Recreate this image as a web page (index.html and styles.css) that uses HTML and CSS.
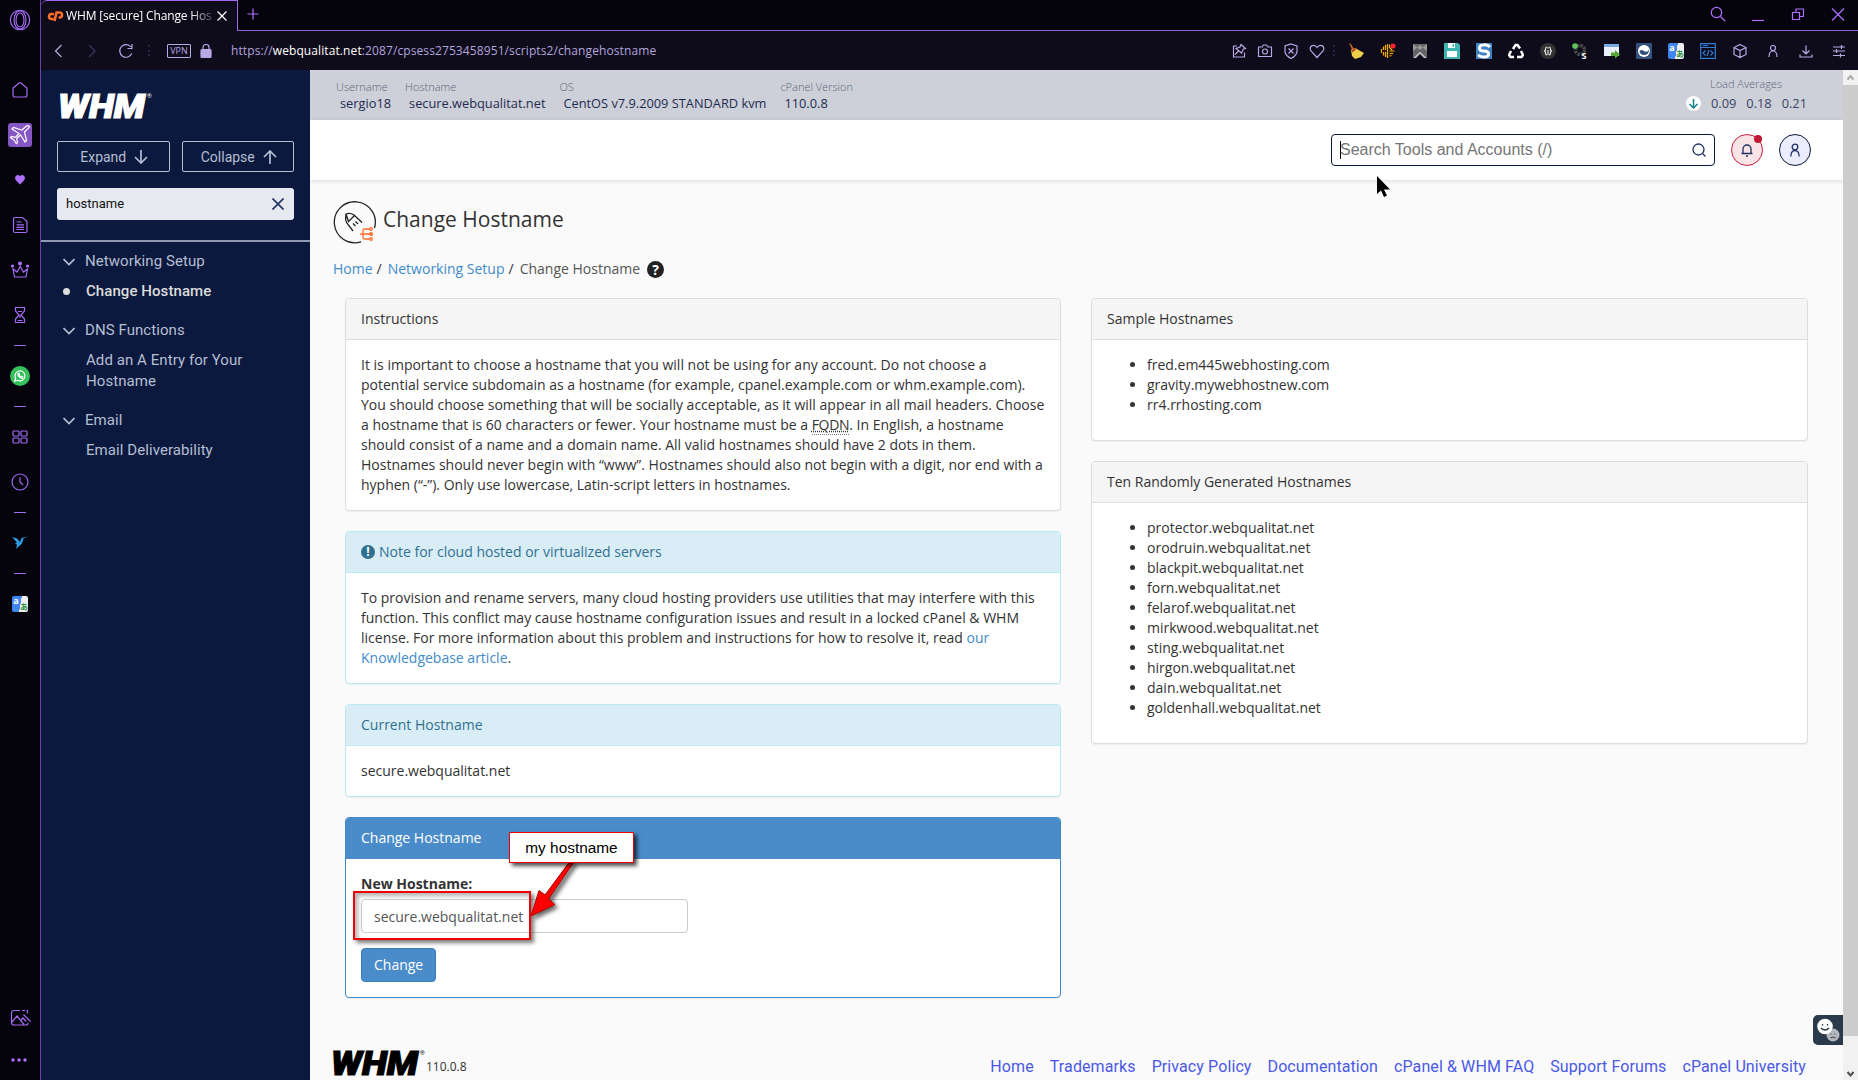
FILE: index.html
```html
<!DOCTYPE html>
<html lang="en">
<head>
    <meta charset="UTF-8">
    <meta name="viewport" content="width=device-width, initial-scale=1.0">
    <title>WHM [secure] Change Hostname</title>
    <link rel="stylesheet" href="styles.css">
</head>
<body>
    <nav class="rail">
        <div class="rail-logo"><svg width="22" height="22" viewBox="0 0 22 22"><circle cx="11" cy="11" r="9.7"/><ellipse cx="11" cy="11" rx="6" ry="9"/><ellipse cx="11" cy="11" rx="4" ry="7"/></svg></div>
        <div class="rail-item"><svg width="18" height="18" viewBox="0 0 18 18"><path d="M2 7.2 8 2q1-.8 2 0l6 5.2V14q0 2-2 2H4q-2 0-2-2z"/></svg></div>
        <div class="rail-item"><div class="rail-active"><svg width="22" height="22" viewBox="0 0 22 22"><path d="M20 2c-1.3-1-3 .2-4.300 1.500L13 6 4.500 3.500 3 5l7 4.500-3.500 3.800-4-.8-1 1.200 3.500 2.300 2.300 3.500 1.200-1-.8-4L11.500 11l4.500 7 1.500-1.500L15.500 8l2.700-2.700C19.500 4 21 3 20 2z"/></svg></div></div>
        <div class="rail-item"><svg class="solid" width="12" height="11" viewBox="0 0 12 11"><path d="M6 10.500 1.700 6C-.5 3 3.500-1 6 2.200 8.500-1 12.500 3 10.300 6z"/></svg></div>
        <div class="rail-item"><svg width="18" height="18" viewBox="0 0 18 18"><path d="M4 1.500h7.500L16 5.500V15q0 1.500-1.500 1.500H4Q2.500 16.500 2.500 15V3Q2.500 1.500 4 1.500zM5.500 6h5M5.500 8.800h7.500M5.500 11.300h7.500M5.500 13.500h7.500"/></svg></div>
        <div class="rail-item"><svg width="20" height="20" viewBox="0 0 20 20"><path d="M3 9l1.500 8h11.500L17.500 9l-4 3-3.300-5.500L7 12z"/><g class="solid"><circle cx="10" cy="3.500" r="2"/><circle cx="2.500" cy="6" r="1.600"/><circle cx="17.500" cy="6" r="1.600"/></g></svg></div>
        <div class="rail-item"><svg width="18" height="18" viewBox="0 0 18 18"><path d="M4.500 1.500h9v3.500L10 9l3.500 4v3.500h-9V13L8 9 4.500 5zM7 5.500h4M6.500 14.500h5M9 9v3"/></svg></div>
        <hr>
        <div class="rail-item"><svg class="wa" width="20" height="20" viewBox="0 0 20 20"><circle cx="10" cy="10" r="10"/><path d="M4.800 15.200l.8-2.900a5 5 0 1 1 2 2z"/><path d="M8 7.500c-.3 2.500 2 5 4.500 4.800l.3-1.200-1.400-.8-.8.6-1.500-1.500.5-.8L9 7.200z"/></svg></div>
        <hr>
        <div class="rail-item"><svg width="16" height="16" viewBox="0 0 16 16"><rect x="1" y="2" width="6" height="5" rx="1"/><rect x="9" y="2" width="6" height="5" rx="1"/><rect x="1" y="9" width="6" height="5" rx="1"/><rect x="9" y="9" width="6" height="5" rx="1"/></svg></div>
        <div class="rail-item"><svg width="18" height="18" viewBox="0 0 18 18"><circle cx="9" cy="9" r="8"/><path d="M9 4.500V9l3 3"/></svg></div>
        <hr>
        <div class="rail-item"><svg class="bird" width="16" height="14" viewBox="0 0 16 14"><path d="M0 1 5 2.500 8 6l1.500-4L16 .5 11.500 2.500 10 7.500 4 13l1-4L3 7l2-.5z"/></svg></div>
        <hr>
        <div class="rail-item"><div class="translate"><span>a</span><span>あ</span></div></div>
        <div class="rail-bottom">
            <svg width="22" height="18" viewBox="0 0 22 18"><path d="M10 1.500H4q-2.500 0-2.500 2.500v9.500Q1.500 16 4 16h12q2 0 2-2M2 13l5-6 7 8.500M11 11l2-2 3 3.500M12 1.500h3M16.500 1.500h1v3M13.500 5.500l7 7"/></svg>
            <svg class="solid" width="18" height="6" viewBox="0 0 18 6"><circle cx="3" cy="3" r="1.700"/><circle cx="9" cy="3" r="1.700"/><circle cx="15" cy="3" r="1.700"/></svg>
        </div>
    </nav>

    <div class="window">
        <div class="tabs">
            <div class="tab">
                <svg width="17" height="12" viewBox="0 0 17 12"><path d="M7 4H4.500a2.500 2.500 0 0 0 0 5H6.500M7.500 11 9.500 2.500H12.500a2.500 2.500 0 0 1 0 5H11.500"/></svg>
                <span class="tab-title">WHM [secure] Change Hos</span>
                <svg class="tab-close" width="12" height="12" viewBox="0 0 12 12"><path d="M1.500 1.500l9 9M10.500 1.500l-9 9"/></svg>
            </div>
            <div class="tab-rest">
                <svg width="12" height="12" viewBox="0 0 12 12"><path d="M6 .5v11M.5 6h11"/></svg>
                <div class="win-buttons">
                    <svg width="16" height="16" viewBox="0 0 16 16"><circle cx="6.500" cy="6.500" r="5.200"/><path d="M10.500 10.500 15 15"/></svg>
                    <svg width="16" height="16" viewBox="0 0 16 16"><path d="M2 14.500h12"/></svg>
                    <svg width="16" height="16" viewBox="0 0 16 16"><path d="M2.500 6.500h7v7h-7zM6 6V3h7.500v7.500H10"/></svg>
                    <svg width="16" height="16" viewBox="0 0 16 16"><path d="M2 2.500l12 12M14 2.500l-12 12"/></svg>
                </div>
            </div>
        </div>

        <div class="toolbar">
            <div class="nav-buttons">
                <svg width="14" height="14" viewBox="0 0 14 14"><path d="M9.500 1 3.500 7l6 6"/></svg>
                <svg class="dim" width="14" height="14" viewBox="0 0 14 14"><path d="M4 1l6 6-6 6"/></svg>
                <svg width="16" height="16" viewBox="0 0 16 16"><path d="M13.800 10.500A6.300 6.300 0 1 1 13 4M14 1v4.500H9.500"/></svg>
            </div>
            <span class="dots"></span>
            <span class="vpn">VPN</span>
            <svg class="lock" width="12" height="14" viewBox="0 0 12 14"><rect x="1" y="5.500" width="10" height="8" rx="1"/><path d="M3 6V3.500a3 3 0 0 1 6 0V6"/></svg>
            <div class="url">https://<b>webqualitat.net</b>:2087/cpsess2753458951/scripts2/changehostname</div>
            <div class="page-actions">
                <svg width="16" height="16" viewBox="0 0 16 16"><path d="M6 3H2.500v11h11V9.500M10 1.500l4.500 4-2 .5-2 4-5.500-4.500 4-1.500zM7.500 8 4 11.500"/></svg>
                <svg width="16" height="16" viewBox="0 0 16 16"><path d="M1.500 4h3.500l1.500-2h3L11 4h3.500v9.500h-13z"/><circle cx="8" cy="8.500" r="2.500"/></svg>
                <svg width="16" height="16" viewBox="0 0 16 16"><path d="M8 1 14 3v6q-1 4-6 6.500Q3 13 2 9V3zM5.500 5.500l5 5M10.500 5.500l-5 5"/></svg>
                <svg width="16" height="16" viewBox="0 0 16 16"><path d="M8 14.500 2 8C-1 3.500 5 0 8 4.500 11 0 17 3.500 14 8z"/></svg>
            </div>
            <span class="dots"></span>
            <div class="extensions">
                <svg width="16" height="16" viewBox="0 0 16 16"><path d="M1 0l2 1 3 5-2 1z" fill="#b5651d"/><path d="M3 7l4-2 9 5-3 4-6 2-3-3z" fill="#f0d048"/><path d="M3.500 7.500 7 5l1 1.500-3.500 3z" fill="#b33a22"/></svg>
                <svg width="16" height="16" viewBox="0 0 16 16"><circle cx="7.500" cy="8" r="7" fill="#1c1300"/><path d="M1.500 6v4M3.500 3.500v3.500M3.500 9v3.500M5.500 2v5M5.500 9v5M7.500 1v14M9.500 1.500v3L12 7M9.500 8h5M9.500 10.500H13M9.500 13l2-.5" stroke="#efae16" stroke-width="1.200"/><circle cx="13" cy="3" r="2.500" fill="#f23"/></svg>
                <svg width="16" height="16" viewBox="0 0 16 16"><path d="M1 1h14v14L8 7.500 1 15z" fill="#666"/><path d="M1 1l7 6 7-6v7L8 2 1 8z" fill="#999"/><path d="M1 15l7-7 7 7h-3l-4-4-4 4z" fill="#bbb"/></svg>
                <svg width="16" height="16" viewBox="0 0 16 16"><path d="M0 0h14l2 2v14H0z" fill="#3fb5b0"/><path d="M4 0h7v5H4zM3 8h10v6H3z" fill="#fff"/><path d="M8.500 1h1.500v3H8.500z" fill="#3fb5b0"/></svg>
                <svg width="16" height="16" viewBox="0 0 16 16"><path d="M0 0h16v16H0z" fill="#3e83c4"/><path d="M14 4Q12 1.500 8 1.800 3.500 2 3.500 5t4.500 3 4.500 3-4.500 3q-4 0-6-2" stroke="#fff" stroke-width="3"/></svg>
                <svg width="16" height="16" viewBox="0 0 16 16"><path d="M5 6 7.500 2h2L12 5.500M13 8l2 4-1.500 2H9M6 14H2.500L1 12l2-4" stroke="#fff" stroke-width="2.500"/></svg>
                <svg width="16" height="16" viewBox="0 0 16 16"><circle cx="8" cy="8" r="8" fill="#333"/><path d="M7 4Q5.500 4 5.500 6v1L4.500 8l1 1v1q0 2 1.500 2M9 4q1.500 0 1.500 2v1l1 1-1 1v1q0 2-1.500 2M8 4v1.500M8 7v5" stroke="#eee" stroke-width="1.100"/></svg>
                <svg width="16" height="16" viewBox="0 0 16 16"><circle cx="8" cy="7" r="4.500" stroke="#484848" stroke-width="3.500" stroke-dasharray="2.500 1"/><circle cx="3" cy="3" r="2.800" fill="#5fc45a"/><text x="9.500" y="15.500" class="badge-s">S</text></svg>
                <svg width="16" height="16" viewBox="0 0 16 16"><path d="M0 1h15v12H0z" fill="#e9f2fb"/><path d="M0 1h15v3H0z" fill="#7aa9de"/><path d="M7 9.500h4V7l5 4.500-5 4V13H7z" fill="#57a639"/></svg>
                <svg width="16" height="16" viewBox="0 0 16 16"><path d="M0 0h16v16H0z" fill="#34507c"/><circle cx="8" cy="8" r="6" fill="#fff"/><path d="M3.500 8.500Q5 6 8 8t5-1.500Q13 12 8 12 4.500 12 3.500 8.500z" fill="#34507c"/></svg>
                <div class="translate"><span>a</span><span>あ</span></div>
                <svg width="16" height="16" viewBox="0 0 16 16"><path d="M.7.700h14.600v14.600H.7zM1 4.500h14M3 2.500h5M5.500 7.500l-2.500 2.500 2.500 2.500M10.500 7.500l2.500 2.500-2.500 2.500M9 7l-2 6" stroke="#2f7fd6" stroke-width="1.200"/></svg>
            </div>
            <div class="browser-actions">
                <svg width="16" height="16" viewBox="0 0 16 16"><path d="M8 1.500 14 4.500v7L8 14.500 2 11.500v-7zM2 4.500l6 3 6-3M8 7.500v7"/></svg>
                <svg width="16" height="16" viewBox="0 0 16 16"><circle cx="8" cy="5" r="2.500"/><path d="M4 14Q4 8 8 8t4 6"/></svg>
                <svg width="16" height="16" viewBox="0 0 16 16"><path d="M8 2.500v8M4.500 7.500 8 11l3.500-3.500M2 11.500V14h12v-2.500"/></svg>
                <svg width="16" height="16" viewBox="0 0 16 16"><path d="M2 4h12M2 8h12M2 12.500h12M10.500 2v4M5.500 6v4M9.500 10.500v4"/></svg>
            </div>
        </div>

        <div class="page">
            <aside class="sidebar">
                <svg class="whm-logo" width="96" height="28" viewBox="0 0 96 28"><text x="1" y="26" textLength="87" lengthAdjust="spacingAndGlyphs">WHM</text><text class="reg" x="90" y="6">®</text></svg>
                <div class="side-buttons">
                    <button>Expand <svg width="14" height="14" viewBox="0 0 14 14"><path d="M7 0v13M1 7l6 6 6-6"/></svg></button>
                    <button>Collapse <svg width="14" height="14" viewBox="0 0 14 14"><path d="M7 14V1M1 7l6-6 6 6"/></svg></button>
                </div>
                <div class="side-search"><span>hostname</span><svg width="12" height="12" viewBox="0 0 12 12"><path d="M.5.500l11 11M11.500.500l-11 11"/></svg></div>
                <div class="menu">
                    <h4><svg width="12" height="8" viewBox="0 0 12 8"><path d="M.5 1 6 6.500 11.500 1"/></svg>Networking Setup</h4>
                    <a class="current" href="#">Change Hostname</a>
                    <h4><svg width="12" height="8" viewBox="0 0 12 8"><path d="M.5 1 6 6.500 11.500 1"/></svg>DNS Functions</h4>
                    <a href="#">Add an A Entry for Your Hostname</a>
                    <h4><svg width="12" height="8" viewBox="0 0 12 8"><path d="M.5 1 6 6.500 11.500 1"/></svg>Email</h4>
                    <a href="#">Email Deliverability</a>
                </div>
            </aside>

            <main class="main">
                <header class="server-info">
                    <dl><dt>Username</dt><dd>sergio18</dd></dl>
                    <dl><dt>Hostname</dt><dd>secure.webqualitat.net</dd></dl>
                    <dl><dt>OS</dt><dd>CentOS v7.9.2009 STANDARD kvm</dd></dl>
                    <dl><dt>cPanel Version</dt><dd>110.0.8</dd></dl>
                    <div class="load">
                        <div class="load-label">Load Averages</div>
                        <div class="load-values"><svg width="15" height="15" viewBox="0 0 15 15"><circle cx="7.500" cy="7.500" r="7.500"/><path d="M7.500 3v9M3.500 8l4 4 4-4"/></svg><span>0.09</span><span>0.18</span><span>0.21</span></div>
                    </div>
                </header>
                <div class="topbar">
                    <div class="search"><span>Search Tools and Accounts (/)</span><svg width="14" height="14" viewBox="0 0 14 14"><circle cx="6.500" cy="6.500" r="5.500"/><path d="M10.500 10.500 13.500 13.500"/></svg></div>
                    <div class="round bell"><svg width="14" height="14" viewBox="0 0 14 14"><path d="M1.500 10.500h11M3 10.500V6a4 4 0 0 1 8 0v4.500M6 13h2"/></svg></div>
                    <div class="round user"><svg width="14" height="14" viewBox="0 0 14 14"><circle cx="7" cy="4" r="2.800"/><path d="M2.800 13.500Q3 7.500 7 7.500t4.200 6"/></svg></div>
                </div>

                <div class="content">
                    <div class="title">
                        <svg width="46" height="44" viewBox="0 0 46 44"><path d="M41.500 28A20.500 20.500 0 1 0 28 41.800"/><path d="M13 14q4-1.500 8 1l8 7.500M13 14q-1 5 .5 8.500L20 31M13 14l2.500 7.500 6-6M20 23.500l2.500 2.500M22.500 21.500l2.500 2.500"/><path class="orange" d="M27 34h13M37 29h-5.500q-1.500 0-1.500 1.500v7q0 1.500 1.500 1.500H37"/><g class="orange"><circle cx="38" cy="29" r="1.300"/><circle cx="38" cy="34" r="1.300"/><circle cx="38" cy="39" r="1.300"/></g></svg>
                        <h1>Change Hostname</h1>
                    </div>
                    <div class="breadcrumb">
                        <a href="#">Home</a><i>/</i><a href="#">Networking Setup</a><i>/</i><span class="here">Change Hostname</span>
                        <span class="help">?</span>
                    </div>

                    <div class="columns">
                        <div class="column">
                            <section class="panel">
                                <h3>Instructions</h3>
                                <div class="panel-body">It is important to choose a hostname that you will not be using for any account. Do not choose a<br>potential service subdomain as a hostname (for example, cpanel.example.com or whm.example.com).<br>You should choose something that will be socially acceptable, as it will appear in all mail headers. Choose<br>a hostname that is 60 characters or fewer. Your hostname must be a <abbr>FQDN</abbr>. In English, a hostname<br>should consist of a name and a domain name. All valid hostnames should have 2 dots in them.<br>Hostnames should never begin with “www”. Hostnames should also not begin with a digit, nor end with a<br>hyphen (“-”). Only use lowercase, Latin-script letters in hostnames.</div>
                            </section>
                            <section class="panel info">
                                <h3><span class="alert">!</span>Note for cloud hosted or virtualized servers</h3>
                                <div class="panel-body">To provision and rename servers, many cloud hosting providers use utilities that may interfere with this<br>function. This conflict may cause hostname configuration issues and result in a locked cPanel &amp; WHM<br>license. For more information about this problem and instructions for how to resolve it, read <a href="#">our<br>Knowledgebase article</a>.</div>
                            </section>
                            <section class="panel info">
                                <h3>Current Hostname</h3>
                                <div class="panel-body">secure.webqualitat.net</div>
                            </section>
                            <section class="panel primary">
                                <h3>Change Hostname</h3>
                                <div class="panel-body">
                                    <label for="hostname">New Hostname:</label>
                                    <input type="text" id="hostname" value="secure.webqualitat.net">
                                    <button class="btn">Change</button>
                                </div>
                            </section>
                        </div>
                        <div class="column">
                            <section class="panel">
                                <h3>Sample Hostnames</h3>
                                <div class="panel-body">
                                    <ul>
                                        <li>fred.em445webhosting.com</li>
                                        <li>gravity.mywebhostnew.com</li>
                                        <li>rr4.rrhosting.com</li>
                                    </ul>
                                </div>
                            </section>
                            <section class="panel">
                                <h3>Ten Randomly Generated Hostnames</h3>
                                <div class="panel-body">
                                    <ul>
                                        <li>protector.webqualitat.net</li>
                                        <li>orodruin.webqualitat.net</li>
                                        <li>blackpit.webqualitat.net</li>
                                        <li>forn.webqualitat.net</li>
                                        <li>felarof.webqualitat.net</li>
                                        <li>mirkwood.webqualitat.net</li>
                                        <li>sting.webqualitat.net</li>
                                        <li>hirgon.webqualitat.net</li>
                                        <li>dain.webqualitat.net</li>
                                        <li>goldenhall.webqualitat.net</li>
                                    </ul>
                                </div>
                            </section>
                        </div>
                    </div>
                </div>

                <footer class="footer">
                    <svg class="whm-logo" width="96" height="28" viewBox="0 0 96 28"><text x="1" y="26" textLength="87" lengthAdjust="spacingAndGlyphs">WHM</text><text class="reg" x="90" y="6">®</text></svg>
                    <span class="version">110.0.8</span>
                    <div class="footer-links">
                        <a href="#">Home</a>
                        <a href="#">Trademarks</a>
                        <a href="#">Privacy Policy</a>
                        <a href="#">Documentation</a>
                        <a href="#">cPanel &amp; WHM FAQ</a>
                        <a href="#">Support Forums</a>
                        <a href="#">cPanel University</a>
                    </div>
                </footer>
            </main>

            <div class="scrollbar">
                <svg width="15" height="15" viewBox="0 0 15 15"><path d="M4.500 9.500 7.500 6l3 3.500"/></svg>
                <div class="thumb"></div>
                <svg class="down" width="15" height="12" viewBox="0 0 15 12"><path d="M4.500 4 7.500 7.500l3-3.500"/></svg>
            </div>
        </div>
    </div>

    <div class="feedback"><svg width="30" height="30" viewBox="0 0 30 30"><circle cx="20" cy="20" r="6.500" fill="#b4b8bd"/><path d="M18 18.500v1M22 18.500v1M17.500 23q2.500-2 5 0" stroke="#2b3a4a"/><circle cx="12" cy="11.500" r="7.800" fill="#fff"/><path d="M9.500 9v1.500M14.500 9v1.500M8 13q4 4 8 0" stroke="#2b3a4a" stroke-width="1.300"/></svg></div>

    <!-- annotations -->
    <div class="mark-box"></div>
    <svg class="mark-arrow" width="64" height="74" viewBox="0 0 64 74"><path d="M50.500 10.500 54 12 28.500 49l6.500 5.500-24 11.500 8-25.500 6 4.500z"/></svg>
    <div class="mark-label">my hostname</div>
    <svg class="cursor" width="15" height="22" viewBox="0 0 15 22"><path d="M1 0v18l4-3.500 3 6.500 3-1.500-3-6H14z"/></svg>
</body>
</html>
```
FILE: styles.css
```css
* {
    box-sizing: border-box;
}
body {
    display: flex;
    width: 1858px;
    height: 1080px;
    margin: 0;
    overflow: hidden;
    position: relative;
    font-family: "Open Sans", "Noto Sans", sans-serif;
    font-size: 14px;
    line-height: 20px;
    color: #333;
    background: #05030c;
}
svg {
    display: block;
    flex: none;
    fill: none;
}
a {
    color: #428bca;
    text-decoration: none;
}

/* browser side rail */
.rail {
    width: 41px;
    display: flex;
    flex-direction: column;
    border-right: 1px solid #6d42a8;
    background: #05030c;
}
.rail svg {
    stroke: #a06bf0;
    stroke-width: 1.2;
}
.rail svg.solid, .rail .solid {
    fill: #b070ff;
    stroke: none;
}
.rail-logo {
    height: 67px;
    padding: 9px;
}
.rail-item {
    height: 45px;
    flex: none;
    display: flex;
    align-items: center;
    justify-content: center;
}
.rail-active {
    width: 24px;
    height: 24px;
    padding: 1px;
    border-radius: 3px;
    background: #8657c4;
}
.rail-active svg {
    stroke: #fff;
}
.rail hr {
    width: 12px;
    height: 1px;
    margin: 8px auto 7px;
    border: 0;
    background: #a06bf0;
}
.rail svg.wa circle {
    fill: #34c05a;
    stroke: none;
}
.rail svg.wa path {
    stroke: #fff;
}
.rail svg.bird {
    fill: #2f9be0;
    stroke: none;
}
.rail-bottom {
    margin-top: auto;
    padding: 0 0 17px 10px;
    display: flex;
    flex-direction: column;
    gap: 30px;
}
.translate {
    width: 16px;
    height: 16px;
    flex: none;
    display: flex;
    border-radius: 2px;
    background: linear-gradient(100deg, #3f86f0 52%, #eee 53%);
    font: bold 9px/9px "Open Sans", "Noto Sans CJK JP", sans-serif;
}
.translate span {
    width: 8px;
    color: #fff;
    text-align: center;
}
.translate span + span {
    padding-top: 6px;
    font-size: 8px;
    color: #2d8f3c;
}

/* tab strip */
.window {
    flex: 1;
    display: flex;
    flex-direction: column;
}
.tabs {
    height: 31px;
    display: flex;
}
.tab {
    width: 197px;
    display: flex;
    align-items: center;
    padding: 0 9px 0 6px;
    border-top: 1px solid #a06bf0;
    border-right: 1px solid #a06bf0;
    border-top-left-radius: 6px;
    background: #0e0b1a;
}
.tab > svg:first-child {
    stroke: #ff6c2c;
    stroke-width: 2.600;
}
.tab-title {
    margin-left: 2px;
    white-space: nowrap;
    font-size: 12px;
    letter-spacing: -0.15px;
    color: #fff;
    -webkit-mask-image: linear-gradient(90deg, #000 124px, rgba(0, 0, 0, 0.25) 146px);
}
.tab-close {
    margin-left: auto;
    stroke: #fff;
    stroke-width: 1.200;
}
.tab-rest {
    flex: 1;
    display: flex;
    align-items: center;
    justify-content: space-between;
    padding: 0 12px 3px 9px;
    border-bottom: 1px solid #8a5cd6;
}
.tab-rest svg {
    stroke: #b070ff;
    stroke-width: 1.200;
}
.win-buttons {
    display: flex;
    gap: 24px;
}

/* address bar */
.toolbar {
    height: 39px;
    display: flex;
    align-items: center;
    padding: 0 11px 0 11px;
    background: #0e0b1a;
}
.toolbar svg {
    stroke: #b8a8e6;
    stroke-width: 1.200;
}
.toolbar svg.dim {
    stroke: #3e3560;
}
.nav-buttons {
    display: flex;
    align-items: center;
    gap: 19px;
}
.dots {
    width: 1px;
    height: 11px;
    margin: 0 17px 0 14px;
    border-left: 2px dotted #2a2444;
}
.vpn {
    width: 24px;
    height: 14px;
    border: 1px solid #b8a8e6;
    border-radius: 1px;
    font-size: 9px;
    line-height: 12px;
    text-align: center;
    color: #b8a8e6;
}
.toolbar .lock {
    margin: 0 19px 0 9px;
}
.lock rect {
    fill: #b8a8e6;
}
.url {
    flex: 1;
    font-size: 12px;
    letter-spacing: 0.1px;
    white-space: nowrap;
    color: #b3a5de;
}
.url b {
    font-weight: 500;
    color: #fff;
}
.page-actions {
    display: flex;
    gap: 10px;
}
.page-actions + .dots {
    margin: 0 13px 0 8px;
}
.extensions {
    display: flex;
    gap: 16px;
}
.toolbar .extensions svg {
    stroke: none;
}
.extensions .badge-s {
    font: bold 9px "Open Sans", sans-serif;
    fill: #fff;
}
.browser-actions {
    display: flex;
    gap: 17px;
    margin-left: 16px;
}

/* whm sidebar */
.page {
    flex: 1;
    display: flex;
    min-height: 0;
}
.sidebar {
    width: 269px;
    flex: none;
    padding-top: 22px;
    background: #0a193d;
    font-family: Roboto, sans-serif;
    color: #b6bed3;
}
.whm-logo {
    font: italic 900 34px Roboto, sans-serif;
    fill: #fff;
    stroke: #fff;
    stroke-width: 1.200;
}
.whm-logo .reg {
    font: 6px Roboto, sans-serif;
    stroke: none;
}
.sidebar .whm-logo {
    margin-left: 16px;
}
.side-buttons {
    display: flex;
    gap: 12px;
    margin: 21px 16px 0 16px;
}
.side-buttons button {
    flex: 1;
    height: 31px;
    display: flex;
    align-items: center;
    justify-content: center;
    gap: 8px;
    padding: 0 0 0 2px;
    border: 1px solid #b6bed3;
    border-radius: 2px;
    background: none;
    font: 14px Roboto, sans-serif;
    color: #b6bed3;
}
.side-buttons svg, .menu svg {
    stroke: #b6bed3;
    stroke-width: 1.700;
}
.side-search {
    height: 32px;
    margin: 16px;
    display: flex;
    align-items: center;
    justify-content: space-between;
    padding: 0 10px 0 9px;
    border-radius: 3px;
    background: #e6e9f0;
    font-size: 13px;
    color: #111;
}
.side-search svg {
    stroke: #1f3263;
    stroke-width: 1.600;
}
.menu {
    margin-top: 20px;
    padding: 9px 40px 0 22px;
    border-top: 2px solid #8f99b3;
    font-size: 15px;
    line-height: 21px;
    letter-spacing: 0.07px;
}
.menu h4 {
    display: flex;
    align-items: center;
    gap: 10px;
    margin: 0 0 9px;
    font-size: 15px;
    font-weight: 400;
}
.menu a {
    display: block;
    margin-bottom: 18px;
    padding-left: 23px;
    color: #b6bed3;
}
.menu a.current {
    display: flex;
    align-items: center;
    gap: 16px;
    padding-left: 0;
    font-weight: 500;
    color: #dcdcdc;
}
.menu a.current::before {
    content: "";
    width: 7px;
    height: 7px;
    border-radius: 50%;
    background: #dcdcdc;
}

/* server info bar */
.main {
    flex: 1;
    display: flex;
    flex-direction: column;
    background: #fafafa;
}
.server-info {
    height: 50px;
    flex: none;
    display: flex;
    padding: 8px 36px 0 26px;
    background: #cdd0d9;
}
.server-info dl {
    margin: 0 14px 0 0;
}
.server-info dt, .load-label {
    font-size: 11px;
    font-weight: 300;
    line-height: 18px;
    color: #5d657c;
}
.server-info dd {
    margin: -2px 0 0 4px;
    font-size: 12.8px;
    line-height: 18px;
    color: #1f2c50;
}
.load {
    margin-left: auto;
    margin-top: -3px;
}
.load-label {
    padding-left: 24px;
}
.load-values {
    display: flex;
    align-items: center;
    gap: 10px;
    color: #3a4462;
    font-size: 12.8px;
}
.load-values circle {
    fill: #fff;
}
.load-values path {
    stroke: #14808c;
    stroke-width: 1.500;
}
.topbar {
    height: 60px;
    flex: none;
    display: flex;
    align-items: center;
    justify-content: flex-end;
    gap: 16px;
    padding-right: 32px;
    background: #fff;
    box-shadow: 0 1px 5px rgba(0, 0, 0, 0.12);
}
.search {
    width: 384px;
    height: 32px;
    display: flex;
    align-items: center;
    justify-content: space-between;
    padding: 0 8px;
    border: 1px solid #0a193d;
    border-radius: 4px;
    font: 16px "Liberation Sans", Arial, sans-serif;
    color: #757575;
}
.search span {
    border-left: 1px solid #000;
    text-indent: -1px;
}
.search svg, .round svg {
    stroke: #1f3263;
    stroke-width: 1.300;
}
.round {
    position: relative;
    width: 32px;
    height: 32px;
    display: flex;
    align-items: center;
    justify-content: center;
    border: 1px solid #0a193d;
    border-radius: 50%;
    background: #ebecfd;
}
.bell {
    border-color: #c8203e;
    background: #f8e4e7;
}
.bell::after {
    content: "";
    position: absolute;
    top: 0;
    right: 0;
    width: 8px;
    height: 8px;
    border-radius: 50%;
    background: #c21733;
}

/* page content */
.content {
    flex: 1;
    padding: 20px 35px 0 23px;
}
.title {
    display: flex;
    align-items: flex-start;
    gap: 4px;
}
.title svg {
    stroke: #222;
    stroke-width: 1.300;
}
.title .orange {
    stroke: #ff6c2c;
}
.title h1 {
    margin: 0;
    font-size: 21px;
    line-height: 39px;
    font-weight: 400;
}
.breadcrumb {
    display: flex;
    align-items: center;
    margin: 15px 0 0;
}
.breadcrumb i {
    margin: 0 6px 0 4px;
    font-style: normal;
}
.here {
    color: #555;
}
.help {
    width: 17px;
    height: 17px;
    margin-left: 7px;
    border-radius: 50%;
    background: #222;
    font: bold 14px/17px "Open Sans", sans-serif;
    text-align: center;
    color: #fff;
}
.columns {
    display: grid;
    grid-template-columns: 716px 717px;
    gap: 30px;
    margin: 19px 0 0 12px;
}
.panel {
    margin-bottom: 20px;
    border: 1px solid #ddd;
    border-radius: 4px;
    background: #fff;
    box-shadow: 0 1px 1px rgba(0, 0, 0, 0.05);
}
.panel h3 {
    margin: 0;
    padding: 10px 15px;
    border-bottom: 1px solid #ddd;
    border-radius: 3px 3px 0 0;
    background: #f5f5f5;
    font-size: 14px;
    font-weight: 400;
}
.panel-body {
    padding: 15px;
    white-space: nowrap;
}
.panel abbr {
    border-bottom: 1px dotted #777;
    text-decoration: underline dotted;
    letter-spacing: -0.3px;
}
.panel.info {
    border-color: #bce8f1;
}
.panel.info h3 {
    border-color: #bce8f1;
    background: #d9edf7;
    color: #31708f;
}
.panel.primary {
    border-color: #428bca;
}
.panel.primary h3 {
    border-color: #4a8cc9;
    background: #4a8cc9;
    color: #fff;
}
.alert {
    display: inline-block;
    width: 14px;
    height: 14px;
    margin-right: 4px;
    border-radius: 50%;
    background: #31708f;
    font: bold 12px/14px "Open Sans", sans-serif;
    text-align: center;
    color: #fff;
    vertical-align: 1px;
}
.panel ul {
    margin: 0 0 10px;
    padding-left: 40px;
}
.panel label {
    display: block;
    margin-bottom: 5px;
    font-weight: 700;
}
.panel input {
    display: block;
    width: 327px;
    height: 34px;
    margin-bottom: 15px;
    padding: 6px 12px;
    border: 1px solid #ccc;
    border-radius: 4px;
    font: 14px "Open Sans", sans-serif;
    color: #555;
}
.btn {
    display: block;
    height: 34px;
    padding: 0 12px 2px;
    border: 1px solid #357ebd;
    border-radius: 4px;
    background: #4a8cc9;
    font: 14px "Open Sans", sans-serif;
    color: #fff;
}

/* footer */
.footer {
    display: flex;
    align-items: center;
    padding: 0 37px 0 20px;
    height: 34px;
    flex: none;
}
.footer .whm-logo {
    fill: #000;
    stroke: #000;
}
.version {
    padding-top: 8px;
    font-size: 12px;
}
.footer-links {
    display: flex;
    gap: 16px;
    margin-left: auto;
    padding-top: 6px;
    font: 16px Roboto, sans-serif;
    letter-spacing: 0.1px;
}
.footer-links a {
    color: #4a58e8;
}

.scrollbar {
    width: 15px;
    flex: none;
    display: flex;
    flex-direction: column;
    background: #f1f1f1;
}
.scrollbar svg {
    stroke: #aaa;
    stroke-width: 2;
}
.scrollbar .down {
    stroke: #505050;
}
.thumb {
    flex: 1;
    margin-bottom: 32px;
    background: #cdcdcd;
}

/* things that float over the page */
.feedback {
    position: absolute;
    right: 15px;
    top: 1015px;
    width: 30px;
    height: 30px;
    border-radius: 5px 0 0 5px;
    background: #2b3a4a;
}
.mark-box {
    position: absolute;
    left: 353px;
    top: 891px;
    width: 178px;
    height: 49px;
    border: 2px solid #f00000;
    box-shadow: 3px 3px 4px rgba(0, 0, 0, 0.5), inset 3px 3px 4px rgba(0, 0, 0, 0.3);
}
.mark-label {
    position: absolute;
    left: 509px;
    top: 832px;
    width: 125px;
    height: 31px;
    border: 1px solid #f00000;
    background: #fff;
    box-shadow: 3px 3px 4px rgba(0, 0, 0, 0.7);
    font: 15.4px/29px "Liberation Sans", Arial, sans-serif;
    text-align: center;
    color: #000;
}
.mark-arrow {
    position: absolute;
    left: 520px;
    top: 850px;
    fill: #f00;
    stroke: #a00;
    filter: drop-shadow(3px 3px 2px rgba(0, 0, 0, 0.6));
}
.cursor {
    position: absolute;
    left: 1376px;
    top: 176px;
    fill: #000;
}
```
